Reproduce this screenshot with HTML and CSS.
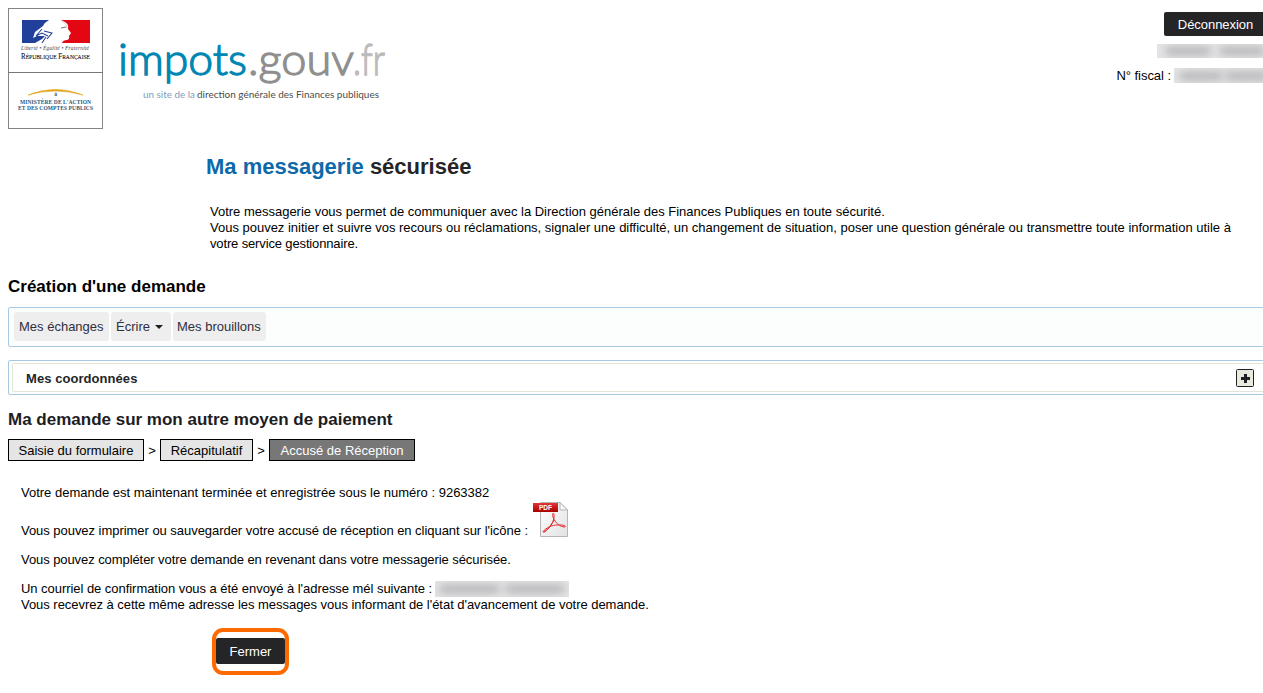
FILE: index.html
```html
<!DOCTYPE html>
<html lang="fr">
<head>
<meta charset="utf-8">
<title>Ma messagerie sécurisée</title>
<link rel="stylesheet" href="styles.css">
</head>
<body>
<header class="header">
  <svg class="marianne" width="95" height="121" viewBox="0 0 95 121">
    <rect x=".5" y=".5" width="94" height="120" fill="#fff" stroke="#858585"/>
    <path d="M0 64.5H95" stroke="#777"/>
    <path d="M14 12H41Q37 14 35 18Q31 21 27 24L25 30L29 28H37L34 31L27 35H14Z" fill="#21409a"/>
    <path d="M53 12H82V35H54Q55 32 59 32Q62 31 61 28L63 25L60 21Q61 16 57 14Z" fill="#e30613"/>
    <path d="M34 21L28 28L34 25L40 28M36 23L44 25L39 31M38 29L34 35" fill="none" stroke="#21409a" stroke-width="1.1"/>
    <path d="M53 20L58 19" fill="none" stroke="#777"/>
    <path d="M54 13Q59 16 59 20" fill="none" stroke="#dcd5d5"/>
    <text class="motto" x="13" y="42" textLength="68">Liberté • Égalité • Fraternité</text>
    <text class="republic" x="13" y="51" textLength="69" lengthAdjust="spacingAndGlyphs">R<tspan class="small-cap">ÉPUBLIQUE</tspan> F<tspan class="small-cap">RANÇAISE</tspan></text>
    <path d="M20 87Q47 76 75 87Q47 79 20 87Z" fill="#e0a51d" stroke="#e0a51d" stroke-width=".6"/>
    <text class="ministry" x="47.5" y="88" text-anchor="middle">à</text>
    <text class="ministry" x="12" y="95.5" textLength="71">MINISTÈRE DE L'ACTION</text>
    <text class="ministry" x="10" y="101.5" textLength="75">ET DES COMPTES PUBLICS</text>
  </svg>
  <svg class="brand" width="280" height="75" viewBox="0 0 280 75">
    <g class="brand-name">
      <text x="-3" y="42" textLength="129" lengthAdjust="spacingAndGlyphs" fill="#0086b3" stroke="#0086b3">impots</text>
      <text x="127" y="42" textLength="106" lengthAdjust="spacingAndGlyphs" fill="#8f8f8f" stroke="#8f8f8f">.gouv</text>
      <text x="232" y="42" textLength="32" lengthAdjust="spacingAndGlyphs" fill="#bbb" stroke="#bbb">.fr</text>
    </g>
    <text class="tagline" x="22" y="65" textLength="52" lengthAdjust="spacingAndGlyphs" fill="#7b9fbd">un site de la</text>
    <text class="tagline" x="76" y="65" textLength="182" lengthAdjust="spacingAndGlyphs" fill="#4c4c4c">direction générale des Finances publiques</text>
  </svg>
  <div class="account">
    <button class="button logout">Déconnexion</button>
    <div class="masked name"><i></i><i></i></div>
    <div class="fiscal"><span>N° fiscal :</span><div class="masked number"><i></i><i></i></div></div>
  </div>
</header>
<main class="main">
  <section class="intro">
    <h1 class="page-title"><span class="accent">Ma messagerie</span> sécurisée</h1>
    <p class="description">Votre messagerie vous permet de communiquer avec la Direction générale des Finances Publiques en toute sécurité.<br>Vous pouvez initier et suivre vos recours ou réclamations, signaler une difficulté, un changement de situation, poser une question générale ou transmettre toute information utile à<br><span class="last-line">votre service gestionnaire.</span></p>
  </section>
  <h2 class="section-title">Création d'une demande</h2>
  <nav class="toolbar">
    <a class="tab">Mes échanges</a>
    <a class="tab write">Écrire <span class="caret"></span></a>
    <a class="tab drafts">Mes brouillons</a>
  </nav>
  <section class="panel"><div class="panel-inner">
    <b class="panel-title">Mes coordonnées</b>
    <svg width="18" height="18" viewBox="0 0 18 18"><rect x=".5" y=".5" width="17" height="17" rx="1" fill="#e8eade" stroke="#202124"/><path d="M9.5 5v9M5 9.5h9" stroke="#202124" stroke-width="3"/></svg>
  </div></section>
  <h2 class="section-title request-title">Ma demande sur mon autre moyen de paiement</h2>
  <div class="steps">
    <span class="step form">Saisie du formulaire</span><span class="separator">&gt;</span>
    <span class="step recap">Récapitulatif</span><span class="separator">&gt;</span>
    <span class="step receipt">Accusé de Réception</span>
  </div>
  <section class="confirmation">
    <p class="line registered">Votre demande est maintenant terminée et enregistrée sous le numéro : 9263382</p>
    <div class="download">
      <p class="line print">Vous pouvez imprimer ou sauvegarder votre accusé de réception en cliquant sur l'icône :</p>
      <svg class="pdf" width="36" height="37" viewBox="0 0 36 37">
        <defs><linearGradient id="paper" x2="1" y2="1"><stop stop-color="#fff"/><stop offset="1" stop-color="#e2e2e2"/></linearGradient><linearGradient id="label" x2="0" y2="1"><stop stop-color="#e33535"/><stop offset="1" stop-color="#a90000"/></linearGradient></defs>
        <path d="M7.5 1.5H27L34.5 9V35.5H7.5Z" fill="url(#paper)" stroke="#b5b5b5"/>
        <path d="M27 1.5V9H34.5Z" fill="#f8f8f8" stroke="#b5b5b5"/>
        <rect y="2" width="25" height="9" fill="url(#label)"/>
        <text class="pdf-label" x="6" y="9" textLength="13" lengthAdjust="spacingAndGlyphs">PDF</text>
        <path d="M11 31C16 28 22 21 21 13C20 11 19 13 20 16C22 22 27 26 32 26C34 24 25 23 18 25C12 28 10 30 10 31C12 32 17 26 21 19" fill="none" stroke="#e02b31" stroke-width="1"/>
      </svg>
    </div>
    <p class="line complete">Vous pouvez compléter votre demande en revenant dans votre messagerie sécurisée.</p>
    <div class="mail"><p class="line sent">Un courriel de confirmation vous a été envoyé à l'adresse mél suivante :</p><div class="masked address"><i></i><i></i></div></div>
    <p class="line status">Vous recevrez à cette même adresse les messages vous informant de l'état d'avancement de votre demande.</p>
    <div class="highlight"><button class="button close">Fermer</button></div>
  </section>
</main>
</body>
</html>
```
FILE: styles.css
```css
* { box-sizing: border-box; }
html { overflow: hidden; }
body { margin: 0; width: 1273px; height: 693px; overflow: hidden; background: #fff; color: #000; font: 13px/16px "Liberation Sans", Arial, sans-serif; }
h1, h2, p { margin: 0; }
.header { display: flex; height: 150px; padding-left: 8px; }
.marianne { margin-top: 8px; flex: none; }
.brand { margin: 33px 0 0 18px; flex: none; overflow: visible; }
.motto { font: italic 5.5px "Liberation Serif", serif; fill: #444; }
.republic { font: 7.5px "Liberation Serif", serif; fill: #111; stroke: #111; stroke-width: .1px; }
.small-cap { font-size: 6px; }
.ministry { font: bold 5.5px "Liberation Serif", serif; fill: #28577b; }
.brand-name { font: 300 44px Lato, sans-serif; stroke-width: 1.3px; }
.tagline { font: 9.5px Lato, sans-serif; }
.account { width: 180px; margin-left: auto; padding-top: 12px; display: flex; flex-direction: column; align-items: flex-end; }
.button { display: block; padding: 0; border: 0; border-radius: 2px; background: #252528; color: #fff; font: 13px/16px "Liberation Sans", Arial, sans-serif; }
.logout { width: 109px; height: 24px; padding: 1px 6px 0 0; letter-spacing: -.05px; }
.masked { display: flex; align-items: center; gap: 8px; overflow: hidden; background: #e5e5e7; }
.masked i { height: 8px; border-radius: 4px; background: #b2b2b4; filter: blur(4px); flex: 1; }
.name { width: 116px; height: 14px; margin-top: 8px; padding: 0 8px; }
.fiscal { display: flex; align-items: center; margin-top: 10px; gap: 3px; }
.fiscal span { letter-spacing: -.05px; }
.number { width: 99px; height: 15px; margin-top: -1px; padding: 0 5px; gap: 2px; }
.main { padding-left: 8px; }
.intro { padding-left: 198px; height: 127px; }
.page-title { padding-top: 4px; font-size: 22px; line-height: 25px; color: #252528; }
.accent { color: #0c69aa; }
.description { padding: 25px 0 0 4px; white-space: nowrap; letter-spacing: -.008px; }
.last-line { letter-spacing: -.14px; }
.section-title { font-size: 17px; line-height: 20px; white-space: nowrap; }
.toolbar { display: flex; gap: 2px; height: 40px; margin-top: 10px; padding: 4px 5px; border: 1px solid #a6cae3; border-radius: 2px; background: #fbfefd; }
.tab { display: flex; align-items: center; width: 95px; height: 29px; padding-left: 5px; border-radius: 3px; background: #eee; color: #303040; white-space: nowrap; }
.write { width: 60px; padding-left: 5px; gap: 5px; }
.drafts { width: 93px; padding-left: 4px; }
.caret { width: 0; height: 0; border: 4px solid transparent; border-top-color: #202020; border-bottom: 0; }
.panel { height: 35px; margin-top: 13px; padding: 2px 3px; border: 1px solid #a6cae3; border-radius: 2px; }
.panel-inner { display: flex; align-items: center; justify-content: space-between; height: 29px; padding: 0 14px 0 13px; border: 1px solid #e2e5d8; border-radius: 2px; }
.panel-title { color: #252528; padding-top: 2px; letter-spacing: .06px; }
.request-title { margin-top: 15px; color: #1d1d1f; }
.steps { display: flex; margin-top: 9px; height: 22px; }
.step { border: 1px solid #000; background: #e5e5e5; text-align: center; line-height: 21px; }
.form { width: 136px; }
.recap { width: 93px; }
.receipt { width: 146px; background: #777; color: #fff; }
.separator { width: 16px; text-align: center; line-height: 23px; }
.confirmation { padding: 24px 0 0 13px; }
.line { white-space: nowrap; }
.download { display: flex; align-items: flex-end; height: 38px; gap: 5px; }
.print { letter-spacing: -.04px; }
.pdf { margin-bottom: 1px; }
.pdf-label { font: bold 7px "Liberation Sans", Arial, sans-serif; fill: #fff; }
.complete { margin-top: 13px; letter-spacing: -.075px; }
.mail { display: flex; margin-top: 13px; gap: 3px; }
.sent { letter-spacing: -.045px; }
.status { letter-spacing: -.036px; }
.address { width: 134px; height: 16px; padding: 0 4px; gap: 5px; }
.highlight { display: flex; align-items: center; justify-content: center; width: 77px; height: 47px; margin: 15px 0 0 191px; border: 4px solid #ff6a00; border-radius: 11px; }
.close { width: 69px; height: 26px; margin-top: -1px; padding-top: 1px; }
```
